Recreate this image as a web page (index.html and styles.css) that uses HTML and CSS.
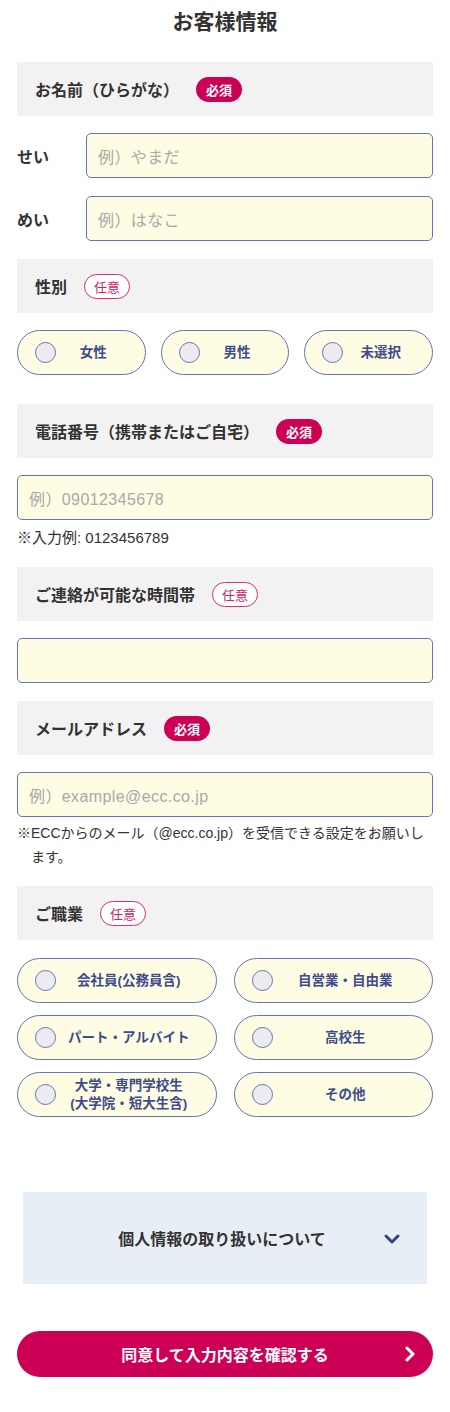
FILE: index.html
```html
<!DOCTYPE html>
<html lang="ja">
<head>
<meta charset="utf-8">
<title>お客様情報</title>
<link rel="stylesheet" href="styles.css">
</head>
<body>
<main class="page">
  <h1 class="title">お客様情報</h1>

  <div class="head mb17"><span class="head-label">お名前（ひらがな）</span><span class="badge req">必須</span></div>
  <div class="name-row mb18"><span class="name-label">せい</span><div class="input"><span class="ph">例）やまだ</span></div></div>
  <div class="name-row mb18"><span class="name-label">めい</span><div class="input"><span class="ph">例）はなこ</span></div></div>

  <div class="head mb17"><span class="head-label">性別</span><span class="badge opt">任意</span></div>
  <div class="radios3 mb29">
    <label class="radio"><span class="dot"></span><span class="rtext">女性</span></label>
    <label class="radio"><span class="dot"></span><span class="rtext">男性</span></label>
    <label class="radio"><span class="dot"></span><span class="rtext">未選択</span></label>
  </div>

  <div class="head mb17"><span class="head-label">電話番号（携帯またはご自宅）</span><span class="badge req">必須</span></div>
  <div class="input"><span class="ph">例）09012345678</span></div>
  <p class="note note-tel mb17">※入力例: 0123456789</p>

  <div class="head mb17"><span class="head-label">ご連絡が可能な時間帯</span><span class="badge opt">任意</span></div>
  <div class="input mb18"></div>

  <div class="head mb17"><span class="head-label">メールアドレス</span><span class="badge req">必須</span></div>
  <div class="input"><span class="ph">例）example@ecc.co.jp</span></div>
  <p class="note hang mb17">※ECCからのメール（@ecc.co.jp）を受信できる設定をお願いします。</p>

  <div class="head mb18"><span class="head-label">ご職業</span><span class="badge opt">任意</span></div>
  <div class="radios2">
    <label class="radio"><span class="dot"></span><span class="rtext">会社員(公務員含)</span></label>
    <label class="radio"><span class="dot"></span><span class="rtext">自営業・自由業</span></label>
    <label class="radio"><span class="dot"></span><span class="rtext">パート・アルバイト</span></label>
    <label class="radio"><span class="dot"></span><span class="rtext">高校生</span></label>
    <label class="radio"><span class="dot"></span><span class="rtext">大学・専門学校生<br>(大学院・短大生含)</span></label>
    <label class="radio"><span class="dot"></span><span class="rtext">その他</span></label>
  </div>

  <div class="accordion">
    <span class="acc-text">個人情報の取り扱いについて</span>
    <svg class="acc-icon" width="16" height="10" viewBox="0 0 16 10"><polyline points="2,2 8,8 14,2" fill="none" stroke="#34428a" stroke-width="3" stroke-linecap="round" stroke-linejoin="round"/></svg>
  </div>

  <button class="submit" type="button">
    <span>同意して入力内容を確認する</span>
    <svg class="submit-icon" width="10" height="16" viewBox="0 0 10 16"><polyline points="2,2 8,8 2,14" fill="none" stroke="#ffffff" stroke-width="3" stroke-linecap="round" stroke-linejoin="round"/></svg>
  </button>
</main>
</body>
</html>
```
FILE: styles.css
```css
* { box-sizing: border-box; }
body {
  margin: 0;
  background: #fff;
  color: #333;
  font-family: "Liberation Sans", "Noto Sans CJK JP", sans-serif;
}
.page {
  width: 450px;
  padding: 0 17px 36px;
}
.title {
  margin: 0 0 24px;
  padding-top: 6px;
  line-height: 32px;
  font-size: 21px;
  font-weight: 700;
  text-align: center;
  color: #333;
}
.mb17 { margin-bottom: 17px; }
.mb18 { margin-bottom: 18px; }
.mb29 { margin-bottom: 29px; }

.head {
  height: 54px;
  background: #f2f2f2;
  display: flex;
  align-items: center;
  padding-left: 18px;
  gap: 17px;
}
.head-label {
  font-size: 16px;
  font-weight: 700;
  color: #333;
}
.badge {
  display: inline-flex;
  align-items: center;
  justify-content: center;
  width: 46px;
  height: 25px;
  border-radius: 13px;
  font-size: 13px;
  font-weight: 700;
}
.badge.req {
  background: #cc0055;
  color: #fff;
}
.badge.opt {
  background: #fff;
  border: 1.5px solid #dc2f6e;
  color: #d42268;
  font-weight: 400;
}

.name-row {
  display: flex;
  align-items: center;
}
.name-label {
  width: 69px;
  flex: none;
  font-size: 16px;
  font-weight: 700;
  color: #333;
}
.name-row .input { flex: 1; }
.input {
  height: 45px;
  border: 1.5px solid #6574b8;
  border-radius: 5px;
  background: #fefce2;
  display: flex;
  align-items: center;
  padding-left: 11px;
}
.ph {
  font-size: 16px;
  letter-spacing: 0.4px;
  color: #a9a9a9;
}
.note {
  margin-top: 0;
  padding-top: 4px;
  font-size: 14px;
  line-height: 24px;
  color: #333;
}
.note-tel {
  padding-top: 6px;
  font-size: 15px;
}
.note.hang {
  padding-left: 14px;
  text-indent: -14px;
}

.radios3 {
  display: grid;
  grid-template-columns: repeat(3, 1fr);
  gap: 15px;
}
.radios2 {
  display: grid;
  grid-template-columns: 1fr 1fr;
  column-gap: 17px;
  row-gap: 12px;
}
.radio {
  height: 45px;
  border: 1.5px solid #6574b8;
  border-radius: 23px;
  background: #fefce2;
  display: flex;
  align-items: center;
  padding-left: 17px;
}
.dot {
  flex: none;
  width: 21px;
  height: 21px;
  border-radius: 50%;
  border: 1.5px solid #6574b8;
  background: #ececf0;
}
.rtext {
  flex: 1;
  margin-right: 14px;
  text-align: center;
  font-size: 13.5px;
  font-weight: 700;
  line-height: 18px;
  color: #3e4c8e;
}

.accordion {
  position: relative;
  margin: 75px 6px 47px;
  height: 92px;
  background: #e8eef6;
  display: flex;
  align-items: center;
  justify-content: center;
}
.acc-text {
  font-size: 16px;
  font-weight: 700;
  color: #333;
  margin-right: 6px;
}
.acc-icon {
  position: absolute;
  right: 27px;
  top: 42px;
}
.submit {
  position: relative;
  width: 100%;
  height: 46px;
  border: none;
  border-radius: 23px;
  background: #cc0055;
  color: #fff;
  font-family: inherit;
  font-size: 16px;
  font-weight: 700;
  display: flex;
  align-items: center;
  justify-content: center;
  padding: 0;
}
.submit-icon {
  position: absolute;
  right: 18px;
  top: 15px;
}
```
